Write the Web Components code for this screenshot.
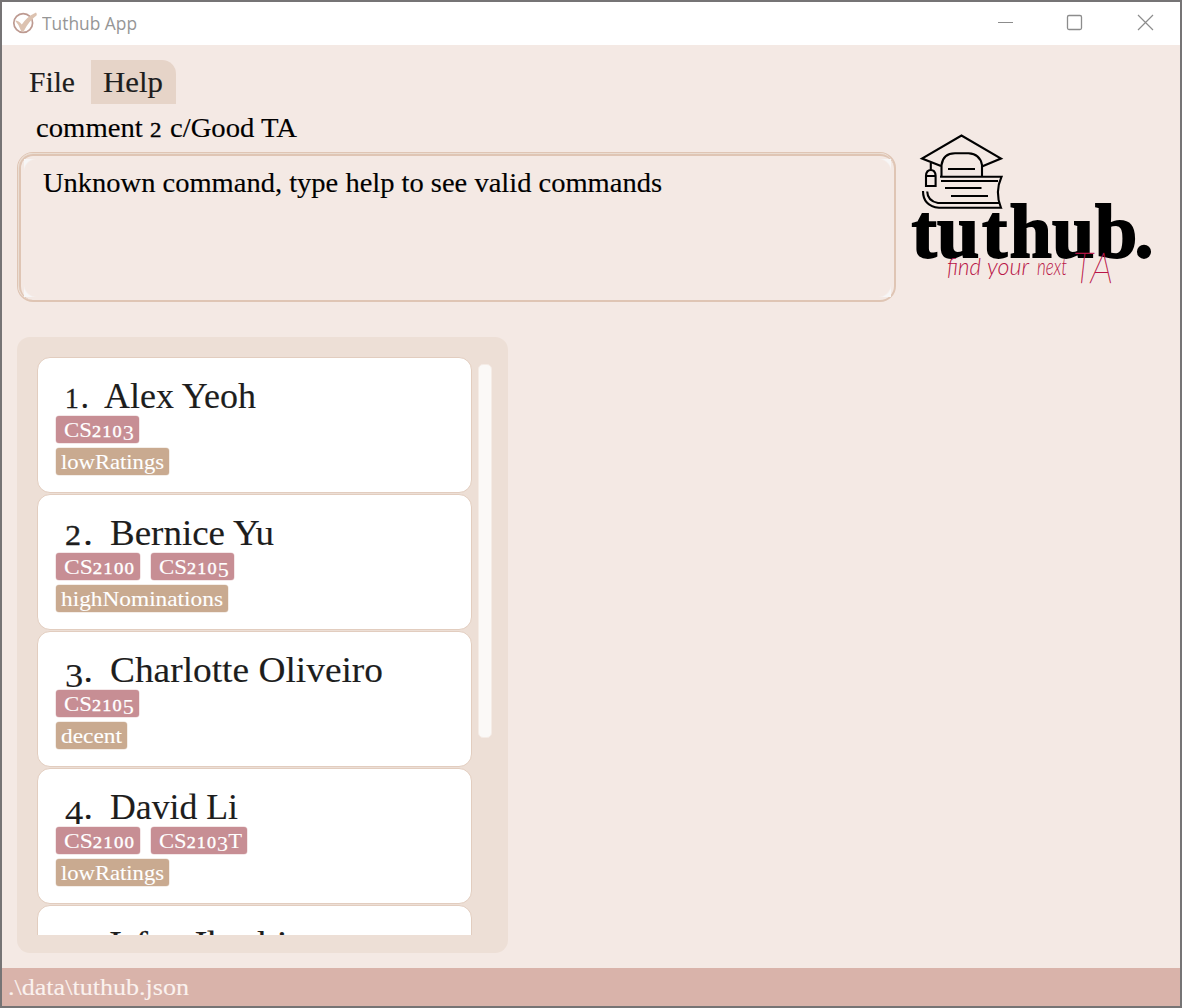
<!DOCTYPE html>
<html lang="en">
<head>
<meta charset="utf-8">
<title>Tuthub App</title>
<style>
html,body{margin:0;height:100%;overflow:hidden}
body{font-family:"Liberation Serif",serif;color:#1d1d1d}
</style>
</head>
<body>
<tuthub-app></tuthub-app>
<script>
// Text run stretched to a given width, with old-style numerals.
class FitText extends HTMLElement{
  connectedCallback(){
    const root=this.attachShadow({mode:'open'});
    const html=this.getAttribute('text').replace(/[0-9]/g,d=>
      '012'.includes(d)?`<i class="s">${d}</i>`:'34579'.includes(d)?`<i class="d">${d}</i>`:d);
    root.innerHTML=`<style>
      :host{display:block;white-space:pre;flex:none;font-size:var(--fs);line-height:var(--lh,1.2)}
      span{display:inline-block;transform-origin:0 50%;vertical-align:top;-webkit-text-stroke:var(--st,.15px) currentColor}
      i{font-style:normal;line-height:0}
      .s{font-size:.8em;letter-spacing:.06em;-webkit-text-stroke:.4px currentColor}
      .d{font-size:.97em;vertical-align:-.15em;letter-spacing:.01em}
    </style><span>${html}</span>`;
    const s=root.querySelector('span'),w=+this.getAttribute('w');
    this.style.width=w+'px';
    s.style.transform=`scaleX(${w/s.getBoundingClientRect().width})`;
  }
}
customElements.define('fit-text',FitText);

class TitleBar extends HTMLElement{
  connectedCallback(){
    this.attachShadow({mode:'open'}).innerHTML=`<style>
      :host{display:flex;align-items:center;height:43px;background:#fff;color:#969696;flex:none}
      .logo{margin-left:9px;flex:none}
      fit-text{margin:0 auto 2px 5px;font-family:"Open Sans","Noto Sans",sans-serif;--fs:18.500px;--lh:26px;--st:0}
      .btns{flex:none}
    </style>
    <svg class="logo" width="26" height="26" viewBox="11 10 26 26"><circle cx="23.2" cy="22" r="9.4" fill="none" stroke="#bd9a91" stroke-width="1.7"/><path d="M15 19.500q3.800 0 6.800 4Q27 15.500 36 11.400q1.200 1.600.5 3.200Q29 20 24 29.800q-1.500 1-3 0-1.700-5.800-6-10.300z" fill="#dcc2b0"/></svg>
    <fit-text text="Tuthub App" w="95"></fit-text>
    <svg class="btns" width="190" height="43" viewBox="990 2 190 43" fill="none" stroke="#8c8c8c"><path d="M998 22.500h15"/><rect x="1067.500" y="15.500" width="14" height="14" rx="1.500" stroke-width="1.300"/><path d="M1138 15l15 15M1153 15l-15 15" stroke-width="1.200"/></svg>`;
  }
}
customElements.define('title-bar',TitleBar);

class MenuStrip extends HTMLElement{
  connectedCallback(){
    this.attachShadow({mode:'open'}).innerHTML=`<style>
      :host{display:flex;height:44px;padding:15px 0 0 15px;flex:none;--fs:30px;--lh:44px}
      div{padding:0 13px 0 12px}
      .on{background:#e6d4c8;border-radius:0 14px 0 0;margin-left:3px}
    </style><div><fit-text text="File" w="46"></fit-text></div><div class="on"><fit-text text="Help" w="60"></fit-text></div>`;
  }
}
customElements.define('menu-strip',MenuStrip);

class ResultBox extends HTMLElement{
  connectedCallback(){
    this.attachShadow({mode:'open'}).innerHTML=`<style>
      :host{display:block;box-sizing:border-box;width:879px;height:150px;border:2px solid #dfc5b4;border-top-width:1px;border-left-width:1px;border-radius:16px;color:#000;--fs:27px;--lh:32px}
      div{box-sizing:border-box;height:100%;border-top:1px solid #eaddd2;border-left:1px solid #eaddd2;border-radius:15px}
      section{box-sizing:border-box;height:146px;border:solid #dfc5b4;border-width:2px 0 0 2px;border-radius:14px;padding:3px 3px 3px 3px}
      p{margin:0;height:138px;box-sizing:border-box;padding:8px 0 0 19px;
        background:radial-gradient(circle at 100% 100%,transparent 12.500px,#f7f6f6 14px) 0 0/13px 13px no-repeat,
        radial-gradient(circle at 0 100%,transparent 12.500px,#f7f6f6 14px) 100% 0/13px 13px no-repeat,
        radial-gradient(circle at 100% 0,transparent 12.500px,#f7f6f6 14px) 0 100%/13px 13px no-repeat,
        radial-gradient(circle at 0 0,transparent 12.500px,#f7f6f6 14px) 100% 100%/13px 13px no-repeat}
    </style><div><section><p><fit-text text="Unknown command, type help to see valid commands" w="619"></fit-text></p></section></div>`;
  }
}
customElements.define('result-box',ResultBox);

class BrandLogo extends HTMLElement{
  connectedCallback(){
    this.attachShadow({mode:'open'}).innerHTML=`<style>:host{display:block;flex:none}svg{display:block}</style>
    <svg width="270" height="190" viewBox="900 120 270 190">
      <g fill="none" stroke="#000" stroke-width="2.100">
        <path d="M941 166l-19-7.500 39.500-23 39.500 23-18.500 7.800"/>
        <path d="M941.500 176.500V165Q943 153.500 955 153.300h13.500Q980 154 982 165v11.500"/>
        <path d="M948 169h27M945 188h36.500M951 196h37M941 181h57"/>
        <path d="M940 176.800h61.500q-7 15.500-.5 31H939Q923 206 923 191"/>
        <path d="M1000 203H938Q927.500 201 927.200 191.500"/>
        <path d="M930.800 163v7M926 186v-10.500q.5-5.500 4.800-5.500t4.800 5.500V186zM926 176h9.500"/>
      </g>
      <text y="256.500" x="911.500 937 982 1009.500 1052 1095 1134.500" font-family="Liberation Serif,serif" font-weight="700" font-size="76" stroke="#000" stroke-width="1.800">tuthub.</text>
      <g fill="#b91547" font-family="Lato,sans-serif" font-weight="300" font-style="italic">
        <text x="947" y="275" font-size="24" textLength="34" lengthAdjust="spacingAndGlyphs">find</text>
        <text x="987" y="275" font-size="24" textLength="42" lengthAdjust="spacingAndGlyphs">your</text>
        <text x="1037" y="275" font-size="24" textLength="30" lengthAdjust="spacingAndGlyphs">next</text>
        <text x="1073" y="283" font-size="42" font-weight="100" stroke="#b91547" stroke-width=".4" textLength="40" lengthAdjust="spacingAndGlyphs">TA</text>
      </g>
    </svg>`;
  }
}
customElements.define('brand-logo',BrandLogo);

class TagChip extends HTMLElement{
  connectedCallback(){
    const m=this.getAttribute('kind')==='module';
    this.attachShadow({mode:'open'}).innerHTML=`<style>
      :host{display:block;box-sizing:border-box;height:27px;border-radius:3px;color:#fff;--fs:21.500px;--lh:28px;--st:.1px;
        background:${m?'#c78e94':'#c9aa90'};padding:0 5px 0 ${m?8:5}px;box-shadow:0 0 0 .5px ${m?'#c78e94':'#c9aa90'}66}
    </style><fit-text text="${this.getAttribute('text')}" w="${this.getAttribute('w')}"></fit-text>`;
  }
}
customElements.define('tag-chip',TagChip);

class PersonCard extends HTMLElement{
  connectedCallback(){
    const a=n=>this.getAttribute(n);
    this.attachShadow({mode:'open'}).innerHTML=`<style>
      :host{display:block;box-sizing:border-box;height:136px;flex:none;background:#fff;border:1px solid #e2cdbf;border-radius:13px;padding:17px 0 0 18.400px}
      .name{display:flex;height:41px;padding-left:8.500px;--fs:35.500px;--lh:42px}
      ::slotted(.row){display:flex;gap:11px;height:27px;margin-bottom:5px}
      .name fit-text+fit-text{margin-left:${a('gap')}px}
    </style><div class="name"><fit-text text="${a('n')}." w="${a('nw')}"></fit-text><fit-text text="${a('name')}" w="${a('w')}"></fit-text></div><slot></slot>`;
  }
}
customElements.define('person-card',PersonCard);

class PersonList extends HTMLElement{
  connectedCallback(){
    this.attachShadow({mode:'open'}).innerHTML=`<style>
      :host{display:flex;box-sizing:border-box;width:491px;height:616px;background:#eddfd6;border-radius:13px;padding:20px 16px 18px 20px;gap:6px}
      .view{display:flex;flex-direction:column;gap:1px;width:435px;height:578px;overflow:hidden}
      .thumb{box-sizing:border-box;width:14px;height:374px;margin-top:7px;border-radius:5px;background:#fbf9f7;border:1px solid #f5ece6}
    </style><div class="view"><slot></slot></div><div class="thumb"></div>`;
  }
}
customElements.define('person-list',PersonList);

class StatusBar extends HTMLElement{
  connectedCallback(){
    this.attachShadow({mode:'open'}).innerHTML=`<style>
      :host{display:block;height:38px;flex:none;background:#d9b3aa;color:#fbf2ef;padding-left:6px;--fs:23.500px;--lh:38px;--st:.1px}
    </style><fit-text text=".\\data\\tuthub.json" w="181"></fit-text>`;
  }
}
customElements.define('status-bar',StatusBar);

const people=[
 ['1','Alex Yeoh',24,152,15,[['CS2103',70]],['lowRatings',103]],
 ['2','Bernice Yu',28,164,17,[['CS2100',71],['CS2105',70]],['highNominations',162]],
 ['3','Charlotte Oliveiro',28,273,17,[['CS2105',70]],['decent',61]],
 ['4','David Li',28,128,17,[['CS2100',71],['CS2103T',83]],['lowRatings',103]],
 ['5','Irfan Ibrahim',28,209,16,[],null]];
const chip=(k,[t,w])=>`<tag-chip kind="${k}" text="${t}" w="${w}"></tag-chip>`;

class TuthubApp extends HTMLElement{
  connectedCallback(){
    this.attachShadow({mode:'open'}).innerHTML=`<style>
      :host{display:flex;flex-direction:column;box-sizing:border-box;width:1182px;height:1008px;border:2px solid #767475;background:#f4e9e4}
      .top{display:flex;height:206px;flex:none}
      .left{padding-left:15px;width:883px;flex:none}
      .cmd{height:48px;padding-left:19px;color:#000;--fs:27px;--lh:48px}
      brand-logo{margin-top:16px}
      main{flex:1;padding:27px 0 0 15px}
    </style>
    <title-bar></title-bar><menu-strip></menu-strip>
    <div class="top"><div class="left"><div class="cmd"><fit-text text="comment 2 c/Good TA" w="261"></fit-text></div><result-box></result-box></div><brand-logo></brand-logo></div>
    <main><person-list>${people.map(([n,name,nw,w,g,mods,rate])=>`<person-card n="${n}" name="${name}" nw="${nw}" w="${w}" gap="${g}"><div class="row">${mods.map(m=>chip('module',m)).join('')}</div><div class="row">${rate?chip('rating',rate):''}</div></person-card>`).join('')}</person-list></main>
    <status-bar></status-bar>`;
  }
}
customElements.define('tuthub-app',TuthubApp);
</script>
</body>
</html>
